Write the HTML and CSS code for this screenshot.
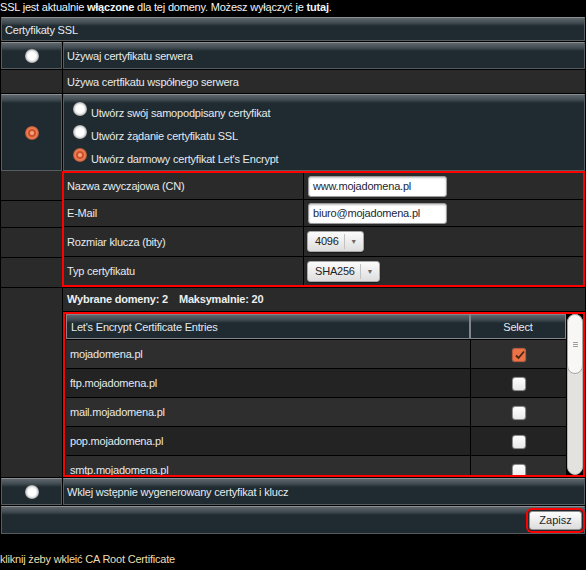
FILE: index.html
```html
<!DOCTYPE html>
<html lang="pl">

<head>
    <meta charset="UTF-8" />
    <meta name="viewport" content="width=device-width, initial-scale=1.0" />
    <link rel="stylesheet" href="styles.css">
</head>

<body>
    <div class="notice">SSL jest aktualnie <b>włączone</b> dla tej domeny. Możesz wyłączyć je <b>tutaj</b>.</div>

    <div class="panel">
        <div class="head teal">Certyfikaty SSL</div>

        <div class="row h27">
            <div class="side teal"><span class="radio"></span></div>
            <div class="main teal">Używaj certyfikatu serwera</div>
        </div>

        <div class="row h23">
            <div class="side grey"></div>
            <div class="main grey">Używa certfikatu współnego serwera</div>
        </div>

        <div class="row h77">
            <div class="side teal"><span class="radio on"></span></div>
            <div class="main teal options">
                <div class="opt"><span class="radio"></span>Utwórz swój samopodpisany certyfikat</div>
                <div class="opt"><span class="radio"></span>Utwórz żądanie certyfikatu SSL</div>
                <div class="opt"><span class="radio on"></span>Utwórz darmowy certyfikat Let's Encrypt</div>
            </div>
        </div>

        <!-- dane certyfikatu -->
        <div class="group">
            <div class="side-stack">
                <div class="grey h29"></div>
                <div class="grey h26"></div>
                <div class="grey h29"></div>
                <div class="grey h29"></div>
            </div>
            <div class="outlined fields">
                <div class="field h26">
                    <div class="label">Nazwa zwyczajowa (CN)</div>
                    <div class="value"><span class="input">www.mojadomena.pl</span></div>
                </div>
                <div class="field h26">
                    <div class="label">E-Mail</div>
                    <div class="value"><span class="input">biuro@mojadomena.pl</span></div>
                </div>
                <div class="field h29">
                    <div class="label">Rozmiar klucza (bity)</div>
                    <div class="value">
                        <span class="select"><span class="val">4096</span><span class="arrow">&#9660;</span></span>
                    </div>
                </div>
                <div class="field h28">
                    <div class="label">Typ certyfikatu</div>
                    <div class="value">
                        <span class="select"><span class="val">SHA256</span><span class="arrow">&#9660;</span></span>
                    </div>
                </div>
            </div>
        </div>

        <!-- lista domen -->
        <div class="row h189">
            <div class="side grey"></div>
            <div class="main-stack">
                <div class="count grey"><b>Wybrane domeny: 2</b><b>Maksymalnie: 20</b></div>
                <div class="outlined list">
                    <div class="viewport">
                        <table class="entries">
                            <thead>
                                <tr>
                                    <th>Let's Encrypt Certificate Entries</th>
                                    <th class="sel">Select</th>
                                </tr>
                            </thead>
                            <tbody id="entries"></tbody>
                        </table>
                    </div>
                    <div class="scrollbar">
                        <div class="thumb"><span class="grip"></span></div>
                    </div>
                </div>
            </div>
        </div>

        <div class="row h27">
            <div class="side teal"><span class="radio"></span></div>
            <div class="main teal">Wklej wstępnie wygenerowany certyfikat i klucz</div>
        </div>

        <div class="actions teal">
            <button class="save">Zapisz</button>
        </div>
    </div>

    <div class="root-link">kliknij żeby wkleić CA Root Certificate</div>

    <script>
        // Lista domen do certyfikatu
        var domains = ["mojadomena.pl", "ftp.mojadomena.pl", "mail.mojadomena.pl", "pop.mojadomena.pl",
            "smtp.mojadomena.pl"];
        var selected = ["mojadomena.pl"];

        var tbody = document.getElementById("entries");
        for (var i = 0; i < domains.length; i++) {
            var row = document.createElement("tr");
            var domainCell = document.createElement("td");
            domainCell.innerText = domains[i];
            var selCell = document.createElement("td");
            selCell.className = "sel";
            var box = document.createElement("span");
            box.className = "check";
            if (selected.indexOf(domains[i]) > -1) {
                box.classList.add("checked");
                box.innerHTML = '<svg width="11" height="11" viewBox="0 0 11 11"><polyline points="2,5.5 4.5,8 10,1.5" fill="none" stroke="#4a2418" stroke-width="1.8"/></svg>';
            }
            selCell.appendChild(box);
            row.appendChild(domainCell);
            row.appendChild(selCell);
            tbody.appendChild(row);
        }
    </script>
</body>

</html>
```

FILE: styles.css
```css
* {
    box-sizing: border-box;
}

body {
    margin: 0;
    width: 586px;
    background-color: #000;
    font-family: "Liberation Sans", Arial, sans-serif;
    font-size: 11px;
    letter-spacing: -0.2px;
    color: #e6eaee;
}

.notice {
    height: 16px;
    line-height: 14px;
    color: #f2f4f6;
}

.panel {
    display: flex;
    flex-direction: column;
    gap: 1px;
    padding: 1px;
}

.row {
    display: flex;
    gap: 1px;
}

.teal {
    background: linear-gradient(#5e666b, #3f4a50 5px, #1f2a31 8px);
    border: 1px solid #565c60;
    border-top-color: #8a8f93;
}

.grey {
    background-color: #2a2a2a;
}

.head {
    height: 24px;
    padding: 1px 0 0 3px;
    display: flex;
    align-items: center;
}

.side {
    width: 61px;
    flex: none;
    display: flex;
    align-items: center;
    justify-content: center;
}

.main {
    flex: 1;
    display: flex;
    align-items: center;
    padding-left: 4px;
}

.main.teal {
    padding-left: 3px;
}

.h23 { height: 23px; }
.h26 { height: 26px; }
.h27 { height: 27px; }
.h28 { height: 28px; }
.h29 { height: 29px; }
.h77 { height: 77px; }
.h189 { height: 189px; }

/* radio buttons */
.radio {
    display: inline-block;
    width: 14px;
    height: 14px;
    border-radius: 50%;
    background: radial-gradient(circle, #fff 0, #fff 3.5px, #ececec 5px, #a2a2a2 7px);
    flex: none;
}

.radio.on {
    background: radial-gradient(circle, #f6a07c 0, #f6a07c 1.5px, #c9502a 2.5px, #c9502a 3.5px, #ee7d52 4.5px, #e27047 5.8px, #94503a 7px);
}

.options {
    flex-direction: column;
    align-items: flex-start;
    justify-content: flex-start;
    padding: 7px 0 0 10px;
}

.main.teal.options {
    padding-left: 9px;
}

.opt {
    height: 23px;
    display: flex;
    align-items: center;
}

.opt .radio {
    margin: 0 4px 8px 0;
}

/* red outlined groups */
.group {
    display: flex;
    height: 116px;
    margin-top: -1px;
}

.side-stack {
    width: 61px;
    display: flex;
    flex-direction: column;
    gap: 1px;
}

.outlined {
    border: 2px solid #f00;
    flex: 1;
}

.fields {
    display: flex;
    flex-direction: column;
    gap: 1px;
    background-color: #000;
}

.field {
    display: flex;
    gap: 1px;
}

.field .label {
    width: 239px;
    background-color: #2a2a2a;
    padding-left: 3px;
    display: flex;
    align-items: center;
}

.field .value {
    flex: 1;
    background-color: #2a2a2a;
    padding-left: 4px;
    display: flex;
    align-items: center;
}

.input {
    width: 139px;
    height: 21px;
    line-height: 19px;
    padding-left: 4px;
    background-color: #fff;
    border: 1px solid #9c9c9c;
    border-radius: 3px;
    box-shadow: inset 0 1px 2px rgba(0, 0, 0, 0.25);
    color: #1b2636;
}

.select {
    display: inline-flex;
    align-items: center;
    height: 21px;
    margin-left: -1px;
    border: 1px solid #a8a8a8;
    border-radius: 3px;
    background: linear-gradient(#fbfbfb, #dedede);
    box-shadow: 0 1px 1px rgba(0, 0, 0, 0.4);
    color: #222;
}

.select .val {
    padding: 0 5px 0 7px;
    height: 15px;
    line-height: 15px;
    border-right: 1px solid #c2c2c2;
}

.select .arrow {
    width: 18px;
    text-align: center;
    font-size: 7px;
    color: #6a6a6a;
}

/* domain list */
.main-stack {
    flex: 1;
    display: flex;
    flex-direction: column;
    gap: 1px;
}

.count {
    height: 23px;
    display: flex;
    align-items: center;
    gap: 11px;
    padding: 0 0 2px 4px;
    color: #eceff1;
}

.list {
    height: 165px;
    flex: none;
    display: flex;
    padding-left: 1px;
}

.viewport {
    flex: 1;
    height: 161px;
    overflow: hidden;
}

.scrollbar {
    width: 16px;
    height: 161px;
    margin-left: 1px;
    background-color: #e4e2de;
    border: 1px solid #b7b5b0;
    border-radius: 8px;
}

.scrollbar .thumb {
    height: 60px;
    margin: -1px;
    display: flex;
    justify-content: center;
    align-items: center;
    background-color: #f8f7f5;
    border: 1px solid #a7a5a0;
    border-radius: 8px;
}

.scrollbar .grip {
    width: 5px;
    height: 5px;
    background: repeating-linear-gradient(#a09e9a 0, #a09e9a 1px, transparent 1px, transparent 2px);
}

.entries {
    width: 100%;
    border-collapse: separate;
    border-spacing: 0;
}

.entries th {
    height: 25px;
    padding: 1px 0 0 4px;
    font-weight: normal;
    text-align: left;
    background: linear-gradient(#5e666b, #3f4a50 5px, #1f2a31 8px);
    border: 1px solid #80868a;
}

.entries th.sel {
    width: 96px;
    text-align: center;
    padding-left: 0;
}

.entries td {
    height: 29px;
    padding: 0 0 0 4px;
    border-top: 1px solid #000;
    background-color: #2e2e2e;
}

.entries tr:nth-child(even) td {
    background-color: #232323;
}

.entries td.sel {
    padding: 1px 0 0 0;
    text-align: center;
    border-left: 1px solid #000;
}

.check {
    display: inline-block;
    width: 14px;
    height: 14px;
    vertical-align: middle;
    border: 1px solid #8c8c8c;
    border-radius: 3px;
    background: linear-gradient(#fff, #e9e9e9);
    box-shadow: 0 0 1px rgba(255, 255, 255, 0.4);
}

.check.checked {
    background: #ea7445;
    border-color: #b8573a;
    line-height: 0;
    padding: 1px 0 0 1px;
}

/* save row */
.actions {
    height: 28px;
    display: flex;
    align-items: center;
    justify-content: flex-end;
    padding-right: 2px;
}

.save {
    width: 53px;
    height: 19px;
    padding: 0;
    font-family: "Liberation Sans", Arial, sans-serif;
    font-size: 11px;
    color: #1f1f1f;
    border: 1px solid #8f8f8f;
    border-radius: 3px;
    background: linear-gradient(#fdfdfd, #dcdcdc);
    box-shadow: 0 0 0 1px #1f2a31, 0 0 0 3px #f00;
    cursor: pointer;
}

.root-link {
    margin-top: 17px;
    line-height: 14px;
    color: #ecdeb2;
}
```
